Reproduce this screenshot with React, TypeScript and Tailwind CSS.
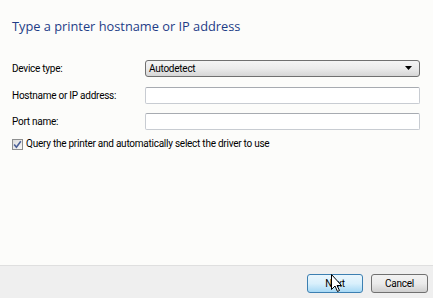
import React from "react";

export default function App() {
  const label = "text-[10px] text-black leading-none tracking-[-0.25px]";
  return (
    <div className="w-[433px] h-[298px] flex flex-col bg-[#fcfcfa] overflow-hidden" style={{ fontFamily: 'Roboto, "Liberation Sans", Arial, sans-serif' }}>
      <div className="flex-1 flex flex-col pl-[12px] pr-[13px]">
        <div className="pt-[17px] text-[12.8px] text-[#1e3c87] leading-[18px]" style={{ fontFamily: '"Open Sans", "Noto Sans", sans-serif' }}>
          Type a printer hostname or IP address
        </div>
        <div className="mt-[25px] flex items-center h-[17px]">
          <div className={`${label} w-[133px]`}>Device type:</div>
          <div className="flex-1 h-[17px] rounded-[3px] border border-[#707070] bg-gradient-to-b from-[#f4f4f4] via-[#ebebeb] to-[#d6d6d6] flex items-center pl-[3px] pr-[6px]">
            <span className={`${label} flex-1`}>Autodetect</span>
            <svg width="8" height="5" viewBox="0 0 8 5"><path d="M0 0H7L3.5 4Z" fill="#000" /></svg>
          </div>
        </div>
        <div className="mt-[10px] flex items-center h-[17px]">
          <div className={`${label} w-[133px]`}>Hostname or IP address:</div>
          <div className="flex-1 h-[17px] rounded-[2px] border border-[#c8ccd2] border-t-[#a7abb1] bg-white" />
        </div>
        <div className="mt-[9px] flex items-center h-[17px]">
          <div className={`${label} w-[133px]`}>Port name:</div>
          <div className="flex-1 h-[17px] rounded-[2px] border border-[#c8ccd2] border-t-[#a7abb1] bg-white" />
        </div>
        <div className="mt-[7px] flex items-center gap-[3px] h-[14px]">
          <div className="w-[11px] h-[11px] border border-[#8e8f8f] bg-gradient-to-br from-[#dcdcdc] to-[#f8f8f8] flex items-center justify-center">
            <svg width="9" height="9" viewBox="0 0 9 9"><path d="M1.2 4.6L3.4 7.2L7.8 1.2" stroke="#4a5f97" strokeWidth="1.6" fill="none" /></svg>
          </div>
          <span className={label}>Query the printer and automatically select the driver to use</span>
        </div>
      </div>
      <div className="h-[33px] border-t border-[#dfdfdf] bg-[#efefef] flex items-start justify-end gap-[8px] pr-[5px] pt-[8px]">
        <div className="relative w-[56px] h-[19px] rounded-[3px] border border-[#3c7fb1] bg-gradient-to-b from-[#eaf6fd] via-[#d9f0fc] to-[#a7d9f5] flex items-center justify-center">
          <span className={label}>Next</span>
          <svg className="absolute left-[23px] top-[-1px]" width="12" height="19" viewBox="0 0 12 19">
            <path d="M0.5 0.5V15.5L4 12L6.5 17.5L8.5 16.5L6 11.5H10.5Z" fill="#fff" stroke="#000" strokeWidth="1" strokeLinejoin="round" />
          </svg>
        </div>
        <div className="w-[57px] h-[19px] rounded-[3px] border border-[#707070] bg-gradient-to-b from-[#f2f2f2] via-[#ebebeb] to-[#cfcfcf] flex items-center justify-center">
          <span className={label}>Cancel</span>
        </div>
      </div>
    </div>
  );
}
